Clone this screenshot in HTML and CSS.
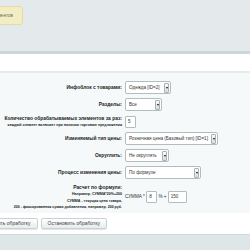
FILE: index.html
```html
<!DOCTYPE html>
<html lang="ru">
<head>
    <meta charset="UTF-8">
    <title>Изменение цен</title>
    <link rel="stylesheet" href="styles.css">
</head>
<body>
    <div class="top">
        <div class="note">Обработано элементов</div>
    </div>
    <div class="spacer"></div>
    <div class="panel">
        <div class="row">
            <div class="label">Инфоблок с товарами:</div>
            <div class="select w-iblock"><span>Одежда [ID=2]</span><i></i></div>
        </div>
        <div class="row">
            <div class="label">Разделы:</div>
            <div class="select w-section"><span>Все</span><i></i></div>
        </div>
        <div class="row">
            <div class="label">Количество обрабатываемых элементов за раз:
                <div class="hint">каждый элемент включает при наличии торговые предложения</div>
            </div>
            <div class="input w-step">5</div>
        </div>
        <div class="row">
            <div class="label">Изменяемый тип цены:</div>
            <div class="select w-price"><span>Розничная цена (Базовый тип) [ID=1]</span><i></i></div>
        </div>
        <div class="row">
            <div class="label">Округлить:</div>
            <div class="select w-round"><span>Не округлять</span><i></i></div>
        </div>
        <div class="row">
            <div class="label">Процесс изменения цены:</div>
            <div class="select w-mode"><span>По формуле</span><i></i></div>
        </div>
        <div class="row formula">
            <div class="label">Расчет по формуле:
                <div class="hint">Например, СУММА*20%+200</div>
                <div class="hint">СУММА - текущая цена товара,</div>
                <div class="hint">200 - фиксированная сумма добавления, например, 200 руб.</div>
            </div>
            <div class="expr">СУММА * <span class="input w-pct">8</span> % + <span class="input w-add">150</span></div>
        </div>
    </div>
    <div class="buttons">
        <div class="btn">Запустить обработку</div>
        <div class="btn">Остановить обработку</div>
    </div>
    <div class="footer"></div>
</body>
</html>
```

FILE: styles.css
```css
* {
    margin: 0;
    padding: 0;
    box-sizing: border-box;
}
body {
    font-family: "Liberation Sans", Arial, sans-serif;
    color: #222;
    background-color: #fff;
    width: 250px;
    height: 250px;
    overflow: hidden;
}
.top {
    height: 54px;
    padding-top: 6px;
    background-color: #e4eaec;
    border-bottom: 3px solid #cdd6d9;
}
.note {
    width: 63px;
    height: 19px;
    margin-left: -40px;
    padding-right: 9px;
    font-size: 4.6px;
    line-height: 17px;
    text-align: right;
    white-space: nowrap;
    overflow: hidden;
    color: #6d6a4e;
    background-color: #f3edc6;
    border: 1px solid #e4dba3;
    border-radius: 3px;
}
.spacer {
    height: 17px;
}
.panel {
    height: 142px;
    padding-top: 6px;
    background-color: #f5f9f9;
    border-top: 2px solid #e6ebec;
}
.row {
    display: grid;
    grid-template-columns: 122px auto;
    column-gap: 3px;
    align-items: center;
    min-height: 17px;
}
.label {
    font-size: 4.9px;
    font-weight: bold;
    text-align: right;
    white-space: nowrap;
    line-height: 7px;
}
.hint {
    font-size: 3.6px;
    line-height: 6.5px;
}
.select {
    display: flex;
    align-items: center;
    justify-content: space-between;
    height: 13px;
    padding: 0 1px 0 3px;
    font-size: 4.6px;
    white-space: nowrap;
    color: #333;
    background-color: #fff;
    border: 1px solid #b5bcbf;
    border-radius: 2px;
}
.select i {
    position: relative;
    flex: none;
    width: 5px;
    height: 10px;
    background: linear-gradient(#fafafa, #d8dcdd);
    border: 1px solid #a9b1b4;
    border-radius: 1px;
}
.select i::after {
    content: "";
    position: absolute;
    left: 0.5px;
    top: 3.5px;
    border-left: 1.5px solid transparent;
    border-right: 1.5px solid transparent;
    border-top: 2px solid #111;
}
.w-iblock { width: 46px; }
.w-section { width: 37px; }
.w-price { width: 93px; }
.w-round { width: 44px; }
.w-mode { width: 76px; }
.input {
    display: inline-block;
    height: 12px;
    padding: 0 2px;
    font-size: 4.6px;
    line-height: 10px;
    color: #333;
    background-color: #fff;
    border: 1px solid #b5bcbf;
    border-radius: 1px;
}
.w-step { width: 11px; }
.w-pct { width: 11px; }
.w-add { width: 19px; }
.formula {
    margin-top: 3px;
}
.expr {
    font-size: 4.6px;
    color: #333;
}
.buttons {
    display: flex;
    gap: 3px;
    height: 21px;
    margin-left: -25px;
    padding-top: 5px;
}
.btn {
    height: 11px;
    padding: 0 6px;
    font-size: 5px;
    line-height: 9px;
    white-space: nowrap;
    color: #444;
    background: linear-gradient(#ffffff, #e7ecec);
    border: 1px solid #c9d1d3;
    border-radius: 2px;
    box-shadow: 0 1px 1px #dfe5e6;
}
.footer {
    height: 20px;
    background-color: #dfe6e8;
    border-top: 1px solid #d2dadc;
}
```
